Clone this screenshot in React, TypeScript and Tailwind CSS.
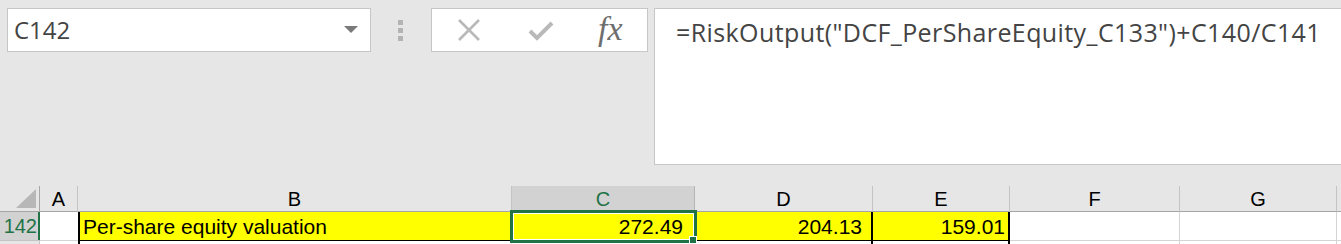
import React from 'react';

const GREEN = '#217346';

function Dots() {
  return (
    <div className="ml-[27px] mt-[12px] flex w-[5px] flex-col gap-[3px]">
      <div className="h-[5px] w-[5px] bg-[#b3b3b3]" />
      <div className="h-[5px] w-[5px] bg-[#b3b3b3]" />
      <div className="h-[5px] w-[5px] bg-[#b3b3b3]" />
    </div>
  );
}

function NameBox() {
  return (
    <div className="ml-[7px] flex h-[44px] w-[364px] items-center border border-[#c6c6c6] bg-white pl-[6px] pr-[12px]">
      <span className="flex-1 text-[24px] leading-none text-[#444]" style={{ fontFamily: '"Open Sans", sans-serif' }}>
        C142
      </span>
      <svg width="14" height="7" viewBox="0 0 14 7" className="mb-[2px]">
        <path d="M0 0 L14 0 L7 7 Z" fill="#7a7a7a" />
      </svg>
    </div>
  );
}

function FormulaButtons() {
  return (
    <div className="ml-[28px] flex h-[44px] w-[217px] items-center border border-[#c6c6c6] bg-white">
      <svg width="24" height="22" viewBox="0 0 24 22" className="ml-[25px]">
        <path d="M2 1 L22 21 M22 1 L2 21" stroke="#b9b9b9" strokeWidth="2.6" fill="none" />
      </svg>
      <svg width="26" height="20" viewBox="0 0 26 20" className="ml-[47px] mt-[2px]">
        <path d="M2 10 L9 17 L24 2" stroke="#b9b9b9" strokeWidth="4" fill="none" />
      </svg>
      <span
        className="ml-[44px] mb-[2px] text-[34px] italic leading-none text-[#6e6e6e]"
        style={{ fontFamily: '"Liberation Serif", serif' }}
      >
        fx
      </span>
    </div>
  );
}

function FormulaBar() {
  return (
    <div className="ml-[6px] h-[157px] flex-1 border-t border-b border-l border-[#c6c6c6] bg-white pl-[21px] pt-[8px]">
      <span
        className="text-[25px] leading-[30px] tracking-[0.4px] text-[#444]"
        style={{ fontFamily: '"Open Sans", sans-serif' }}
      >
        =RiskOutput("DCF_PerShareEquity_C133")+C140/C141
      </span>
    </div>
  );
}

const cols = ['A', 'B', 'C', 'D', 'E', 'F', 'G'];

function HeaderRow() {
  return (
    <>
      <div className="relative h-[26px] border-r border-b border-[#a6a6a6] bg-[#e6e6e6]">
        <svg width="20" height="19" viewBox="0 0 20 19" className="absolute right-[3px] bottom-[3px]">
          <path d="M20 0 L20 19 L0 19 Z" fill="#b7b7b7" />
        </svg>
      </div>
      {cols.map((c) =>
        c === 'C' ? (
          <div
            key={c}
            className="flex h-[26px] items-center justify-center border-r border-b border-r-[#b5b5b5] border-b-[#a6a6a6] bg-[#d2d2d2] pt-[1px] text-[20px] text-[#217346]"
          >
            {c}
          </div>
        ) : (
          <div
            key={c}
            className="flex h-[26px] items-center justify-center border-r border-b border-r-[#c4c4c4] border-b-[#a6a6a6] bg-[#e6e6e6] pt-[1px] text-[20px] text-black"
          >
            {c}
          </div>
        )
      )}
      <div className="h-[26px] border-b border-[#a6a6a6] bg-[#e6e6e6]" />
    </>
  );
}

function DataRow() {
  return (
    <>
      <div className="flex h-[29px] items-center justify-end border-b border-[#c4c4c4] bg-[#d2d2d2] pr-[3px] text-[20px] leading-none" style={{ color: GREEN, boxShadow: `inset -2px 0 0 ${GREEN}` }}>
        142
      </div>
      <div className="h-[29px] border-b border-[#d4d4d4] bg-white" />
      <div className="flex h-[29px] items-center border-l-2 border-b border-black bg-[#ffff00] pl-[3px] text-[21px] leading-none text-black">
        Per-share equity valuation
      </div>
      <div className="relative flex h-[29px] items-center justify-end border-b border-black bg-[#ffff00] pr-[12px] text-[21px] leading-none text-black">
        272.49
        <div className="absolute -top-[2px] -left-[2px] -right-[2px] -bottom-[3px] border-[3px] border-[#217346]">
          <div className="h-full w-full border border-white" />
        </div>
        <div className="absolute -right-[2px] -bottom-[4px] h-[8px] w-[8px] border border-white bg-[#217346]" />
      </div>
      <div className="flex h-[29px] items-center justify-end border-r-2 border-b border-black bg-[#ffff00] pr-[9px] text-[21px] leading-none text-black">
        204.13
      </div>
      <div className="flex h-[29px] items-center justify-end border-r-2 border-b border-black bg-[#ffff00] pr-[3px] text-[21px] leading-none text-black">
        159.01
      </div>
      <div className="h-[29px] border-r border-b border-[#d4d4d4] bg-white" />
      <div className="h-[29px] border-r border-b border-[#d4d4d4] bg-white" />
      <div className="h-[29px] border-b border-[#d4d4d4] bg-white" />
    </>
  );
}

function NextRow() {
  return (
    <>
      <div className="h-[6px] border-r border-[#c4c4c4] bg-[#e6e6e6]" />
      <div className="h-[6px] bg-white" />
      <div className="h-[6px] border-l-2 border-black bg-white" />
      <div className="h-[6px] border-r border-[#d4d4d4] bg-white" />
      <div className="h-[6px] border-r-2 border-black bg-white" />
      <div className="h-[6px] border-r-2 border-black bg-white" />
      <div className="h-[6px] border-r border-[#d4d4d4] bg-white" />
      <div className="h-[6px] border-r border-[#d4d4d4] bg-white" />
      <div className="h-[6px] bg-white" />
    </>
  );
}

export default function App() {
  return (
    <div className="h-[244px] w-[1341px] overflow-hidden bg-[#e6e6e6]">
      <div className="flex h-[165px] items-start pt-2">
        <NameBox />
        <Dots />
        <FormulaButtons />
        <FormulaBar />
      </div>
      <div className="h-[21px]" />
      <div
        className="grid grid-cols-[40px_38px_434px_183px_178px_137px_170px_157px_1fr]"
        style={{ fontFamily: '"Liberation Sans", Arial, sans-serif' }}
      >
        <HeaderRow />
        <DataRow />
        <NextRow />
      </div>
    </div>
  );
}
